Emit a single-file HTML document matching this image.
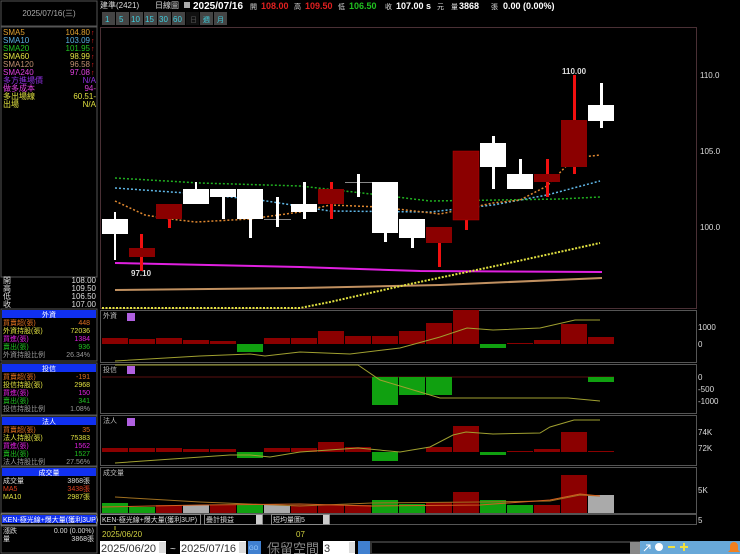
<!DOCTYPE html>
<html><head><meta charset="utf-8"><style>
html,body{margin:0;padding:0;background:#000;width:740px;height:554px;overflow:hidden}
svg{display:block}
text{font-family:"Liberation Sans","Noto Sans CJK TC",sans-serif}
.s{font-size:8px}
.m{font-family:"Liberation Mono","Noto Sans CJK TC",monospace}
</style></head><body>
<svg width="740" height="554" viewBox="0 0 740 554" xmlns="http://www.w3.org/2000/svg">
<rect width="740" height="554" fill="#000"/>
<!-- left panel -->
<rect x="1" y="1" width="96" height="25" fill="#000" stroke="#555"/>
<text x="49" y="16" fill="#aaa" font-size="8" text-anchor="middle">2025/07/16(三)</text>
<rect x="1" y="27" width="96" height="250" fill="#000" stroke="#555"/>
<g class="s" font-size="8">
<text x="3" y="35" fill="#e0a030">SMA5</text><text x="90" y="35" fill="#e0a030" text-anchor="end">104.80</text>
<text x="3" y="43" fill="#5ab0e0">SMA10</text><text x="90" y="43" fill="#5ab0e0" text-anchor="end">103.09</text>
<text x="3" y="51" fill="#20c020">SMA20</text><text x="90" y="51" fill="#20c020" text-anchor="end">101.95</text>
<text x="3" y="59" fill="#e0e040">SMA60</text><text x="90" y="59" fill="#e0e040" text-anchor="end">98.99</text>
<text x="3" y="67" fill="#c09070">SMA120</text><text x="90" y="67" fill="#c09070" text-anchor="end">96.58</text>
<text x="3" y="75" fill="#e040e0">SMA240</text><text x="90" y="75" fill="#e040e0" text-anchor="end">97.08</text>
<text x="3" y="83" fill="#9030e0">多方進場價</text><text x="96" y="83" fill="#9030e0" text-anchor="end">N/A</text>
<text x="3" y="91" fill="#e040e0">做多成本</text><text x="96" y="91" fill="#e040e0" text-anchor="end">94-</text>
<text x="3" y="99" fill="#e0e040">多出場線</text><text x="96" y="99" fill="#e0e040" text-anchor="end">60.51-</text>
<text x="3" y="107" fill="#e0e040">出場</text><text x="96" y="107" fill="#e0e040" text-anchor="end">N/A</text>
</g>
<g fill="#f02020" font-size="7"><text x="91" y="35">↑</text><text x="91" y="43">↑</text><text x="91" y="51">↑</text><text x="91" y="59">↑</text><text x="91" y="67">↑</text><text x="91" y="75">↑</text></g>
<g font-size="8" fill="#ddd">
<text x="3" y="283">開</text><text x="96" y="283" text-anchor="end">108.00</text>
<text x="3" y="291">高</text><text x="96" y="291" text-anchor="end">109.50</text>
<text x="3" y="299">低</text><text x="96" y="299" text-anchor="end">106.50</text>
<text x="3" y="307">收</text><text x="96" y="307" text-anchor="end">107.00</text>
</g>
<!-- 外資 block -->
<rect x="1" y="309" width="96" height="52" fill="#000" stroke="#555"/>
<rect x="2" y="310" width="94" height="8" fill="#1030f0"/>
<text x="49" y="317" fill="#fff" font-size="7" text-anchor="middle">外資</text>
<g font-size="7">
<text x="3" y="325" fill="#e07020">買賣超(張)</text><text x="90" y="325" fill="#e07020" text-anchor="end">448</text>
<text x="3" y="333" fill="#e0e040">外資持股(張)</text><text x="90" y="333" fill="#e0e040" text-anchor="end">72036</text>
<text x="3" y="341" fill="#e020e0">買進(張)</text><text x="90" y="341" fill="#e020e0" text-anchor="end">1384</text>
<text x="3" y="349" fill="#20c020">賣出(張)</text><text x="90" y="349" fill="#20c020" text-anchor="end">936</text>
<text x="3" y="357" fill="#999">外資持股比例</text><text x="90" y="357" fill="#999" text-anchor="end">26.34%</text>
</g>
<!-- 投信 block -->
<rect x="1" y="363" width="96" height="52" fill="#000" stroke="#555"/>
<rect x="2" y="364" width="94" height="8" fill="#1030f0"/>
<text x="49" y="371" fill="#fff" font-size="7" text-anchor="middle">投信</text>
<g font-size="7">
<text x="3" y="379" fill="#e07020">買賣超(張)</text><text x="90" y="379" fill="#e07020" text-anchor="end">-191</text>
<text x="3" y="387" fill="#e0e040">投信持股(張)</text><text x="90" y="387" fill="#e0e040" text-anchor="end">2968</text>
<text x="3" y="395" fill="#e020e0">買進(張)</text><text x="90" y="395" fill="#e020e0" text-anchor="end">150</text>
<text x="3" y="403" fill="#20c020">賣出(張)</text><text x="90" y="403" fill="#20c020" text-anchor="end">341</text>
<text x="3" y="411" fill="#999">投信持股比例</text><text x="90" y="411" fill="#999" text-anchor="end">1.08%</text>
</g>
<!-- 法人 block -->
<rect x="1" y="416" width="96" height="50" fill="#000" stroke="#555"/>
<rect x="2" y="417" width="94" height="8" fill="#1030f0"/>
<text x="49" y="424" fill="#fff" font-size="7" text-anchor="middle">法人</text>
<g font-size="7">
<text x="3" y="432" fill="#e07020">買賣超(張)</text><text x="90" y="432" fill="#e07020" text-anchor="end">35</text>
<text x="3" y="440" fill="#e0e040">法人持股(張)</text><text x="90" y="440" fill="#e0e040" text-anchor="end">75383</text>
<text x="3" y="448" fill="#e020e0">買進(張)</text><text x="90" y="448" fill="#e020e0" text-anchor="end">1562</text>
<text x="3" y="456" fill="#20c020">賣出(張)</text><text x="90" y="456" fill="#20c020" text-anchor="end">1527</text>
<text x="3" y="464" fill="#999">法人持股比例</text><text x="90" y="464" fill="#999" text-anchor="end">27.56%</text>
</g>
<!-- 成交量 block -->
<rect x="1" y="467" width="96" height="46" fill="#000" stroke="#555"/>
<rect x="2" y="468" width="94" height="8" fill="#1030f0"/>
<text x="49" y="475" fill="#fff" font-size="7" text-anchor="middle">成交量</text>
<g font-size="7">
<text x="3" y="483" fill="#ddd">成交量</text><text x="90" y="483" fill="#ddd" text-anchor="end">3868張</text>
<text x="3" y="491" fill="#e04020">MA5</text><text x="90" y="491" fill="#e04020" text-anchor="end">3438張</text>
<text x="3" y="499" fill="#e0e040">MA10</text><text x="90" y="499" fill="#e0e040" text-anchor="end">2987張</text>
</g>
<rect x="1" y="514" width="96" height="11" fill="#000" stroke="#888"/>
<rect x="2" y="515" width="94" height="8" fill="#1030f0"/>
<text x="3" y="522" fill="#fff" font-size="7">KEN-極光線+爆大量(獲利3UP)</text>
<rect x="1" y="526" width="96" height="27" fill="#000" stroke="#555"/>
<g font-size="7" fill="#ddd"><text x="3" y="533">漲跌</text><text x="94" y="533" text-anchor="end">0.00 (0.00%)</text>
<text x="3" y="541">量</text><text x="94" y="541" text-anchor="end">3868張</text></g>

<!-- top bar -->
<g font-size="8" fill="#ddd"><text x="100" y="8">建準(2421)</text><text x="155" y="8">日線圖</text></g>
<rect x="184" y="2" width="6" height="6" fill="#aaa"/>
<text x="193" y="9" fill="#fff" font-size="10" font-weight="bold">2025/07/16</text>
<g font-size="9" font-weight="bold">
<text x="250" y="9" fill="#ddd" font-size="7" font-weight="normal">開</text><text x="261" y="9" fill="#e02020">108.00</text>
<text x="294" y="9" fill="#ddd" font-size="7" font-weight="normal">高</text><text x="305" y="9" fill="#e02020">109.50</text>
<text x="338" y="9" fill="#ddd" font-size="7" font-weight="normal">低</text><text x="349" y="9" fill="#20c020">106.50</text>
<text x="385" y="9" fill="#ddd" font-size="7" font-weight="normal">收</text><text x="396" y="9" fill="#fff">107.00 s</text>
<text x="437" y="9" fill="#ddd" font-size="7" font-weight="normal">元</text>
<text x="451" y="9" fill="#ddd" font-size="7" font-weight="normal">量</text><text x="459" y="9" fill="#fff">3868</text>
<text x="491" y="9" fill="#ddd" font-size="7" font-weight="normal">張</text><text x="503" y="9" fill="#fff">0.00 (0.00%)</text>
</g>
<g font-size="8" fill="#40d0e0">
<rect x="102" y="12" width="13" height="13" fill="#444"/><text x="105" y="22">1</text>
<rect x="116" y="12" width="13" height="13" fill="#444"/><text x="119" y="22">5</text>
<rect x="130" y="12" width="13" height="13" fill="#444"/><text x="131" y="22">10</text>
<rect x="144" y="12" width="13" height="13" fill="#444"/><text x="145" y="22">15</text>
<rect x="158" y="12" width="13" height="13" fill="#444"/><text x="159" y="22">30</text>
<rect x="172" y="12" width="13" height="13" fill="#444"/><text x="173" y="22">60</text>
<rect x="186" y="12" width="13" height="13" fill="#111"/><text x="190" y="22" fill="#555" font-size="7">日</text>
<rect x="200" y="12" width="13" height="13" fill="#444"/><text x="203" y="22" font-size="7">週</text>
<rect x="214" y="12" width="13" height="13" fill="#444"/><text x="217" y="22" font-size="7">月</text>
</g>

<!-- main chart frame -->
<rect x="100.5" y="27.5" width="596" height="281" fill="none" stroke="#4a3035"/>
<g font-size="8" fill="#ddd"><text x="700" y="78">110.0</text><text x="700" y="154">105.0</text><text x="700" y="230">100.0</text></g>

<!-- lines -->
<polyline fill="none" stroke="#e020e0" stroke-width="2" points="115,263 300,267 420,271 602,272"/>
<polyline fill="none" stroke="#c09060" stroke-width="2" points="115,290 300,288 440,285 602,278"/>
<polyline fill="none" stroke="#e0e040" stroke-width="2" stroke-dasharray="2 1.5" points="102,308 300,308 330,302 410,284 500,265 600,243"/>
<polyline fill="none" stroke="#20b020" stroke-width="1.5" stroke-dasharray="2 2" points="115,178 200,183 300,186 380,195 430,201 500,200 560,199 600,197"/>
<polyline fill="none" stroke="#60b8e8" stroke-width="1.5" stroke-dasharray="2 2" points="115,188 200,194 260,200 330,211 430,212 493,205 547,195 600,181"/>
<polyline fill="none" stroke="#e08830" stroke-width="1.5" stroke-dasharray="2 2" points="115,201 145,215 170,219 196,222 250,219 300,212 330,205 380,207 440,214 493,203 520,200 547,186 574,158 600,155"/>

<!-- candles -->
<g>
<rect x="114" y="212" width="2" height="48" fill="#fff"/><rect x="102" y="219" width="26" height="15" fill="#fff"/>
<rect x="140" y="234" width="3" height="37" fill="#f01010"/><rect x="129" y="248" width="26" height="9" fill="#8b0000"/>
<rect x="168" y="204" width="3" height="24" fill="#f01010"/><rect x="156" y="204" width="26" height="15" fill="#8b0000"/>
<rect x="195" y="182" width="2" height="22" fill="#fff"/><rect x="183" y="189" width="26" height="15" fill="#fff"/>
<rect x="222" y="189" width="3" height="30" fill="#fff"/><rect x="210" y="189" width="26" height="8" fill="#fff"/>
<rect x="249" y="189" width="3" height="49" fill="#fff"/><rect x="237" y="189" width="26" height="30" fill="#fff"/>
<rect x="264" y="219" width="27" height="1" fill="#888"/><rect x="276" y="197" width="3" height="30" fill="#fff"/>
<rect x="303" y="182" width="3" height="37" fill="#fff"/><rect x="291" y="204" width="26" height="8" fill="#fff"/>
<rect x="330" y="182" width="3" height="37" fill="#f01010"/><rect x="318" y="189" width="26" height="15" fill="#8b0000"/>
<rect x="345" y="182" width="27" height="1" fill="#888"/><rect x="357" y="174" width="3" height="23" fill="#fff"/>
<rect x="384" y="182" width="3" height="60" fill="#fff"/><rect x="372" y="182" width="26" height="51" fill="#fff"/>
<rect x="411" y="219" width="3" height="29" fill="#fff"/><rect x="399" y="219" width="26" height="19" fill="#fff"/>
<rect x="438" y="227" width="3" height="40" fill="#f01010"/><rect x="426" y="227" width="26" height="16" fill="#8b0000"/>
<rect x="465" y="151" width="3" height="79" fill="#f01010"/><rect x="453" y="151" width="26" height="69" fill="#8b0000" stroke="#c00000" stroke-width="0.5"/>
<rect x="492" y="136" width="3" height="53" fill="#fff"/><rect x="480" y="143" width="26" height="24" fill="#fff"/>
<rect x="519" y="159" width="3" height="30" fill="#fff"/><rect x="507" y="174" width="26" height="15" fill="#fff"/>
<rect x="546" y="159" width="3" height="38" fill="#f01010"/><rect x="534" y="174" width="26" height="8" fill="#8b0000"/>
<rect x="573" y="75" width="3" height="99" fill="#f01010"/><rect x="561" y="120" width="26" height="47" fill="#8b0000"/>
<rect x="600" y="83" width="3" height="45" fill="#fff"/><rect x="588" y="105" width="26" height="16" fill="#fff"/>
</g>
<text x="131" y="276" fill="#ddd" font-size="8" font-weight="bold">97.10</text>
<text x="562" y="74" fill="#ddd" font-size="8" font-weight="bold">110.00</text>

<!-- 外資 panel -->
<rect x="100.5" y="310.5" width="596" height="52" fill="none" stroke="#555"/>
<text x="103" y="318" fill="#bbb" font-size="7">外資</text><rect x="127" y="313" width="8" height="8" fill="#b060e0"/>
<g fill="#8b0000">
<rect x="102" y="338" width="26" height="6"/><rect x="129" y="339" width="26" height="5"/><rect x="156" y="338" width="26" height="6"/><rect x="183" y="340" width="26" height="4"/><rect x="210" y="341" width="26" height="3"/>
<rect x="264" y="338" width="26" height="6"/><rect x="291" y="338" width="26" height="6"/><rect x="318" y="331" width="26" height="13"/><rect x="345" y="336" width="26" height="8"/><rect x="372" y="336" width="26" height="8"/><rect x="399" y="331" width="26" height="13"/><rect x="426" y="323" width="26" height="21"/><rect x="453" y="310" width="26" height="34"/>
<rect x="507" y="343" width="26" height="1"/><rect x="534" y="340" width="26" height="4"/><rect x="561" y="324" width="26" height="20"/><rect x="588" y="337" width="26" height="7"/>
</g>
<g fill="#10a010"><rect x="237" y="344" width="26" height="8"/><rect x="480" y="344" width="26" height="4"/></g>
<polyline fill="none" stroke="#a0a030" stroke-width="1" points="115,361 200,356 250,354 265,356 300,352 350,354 400,348 440,337 467,328 493,330 540,328 575,320 600,320"/>
<g font-size="8" fill="#ddd"><text x="698" y="330">1000</text><text x="698" y="347">0</text></g>

<!-- 投信 panel -->
<rect x="100.5" y="364.5" width="596" height="49" fill="none" stroke="#555"/>
<text x="103" y="372" fill="#bbb" font-size="7">投信</text><rect x="127" y="366" width="8" height="8" fill="#b060e0"/>
<line x1="102" y1="377" x2="614" y2="377" stroke="#5a1010" stroke-width="1"/>
<g fill="#10a010"><rect x="372" y="377" width="26" height="28"/><rect x="399" y="377" width="26" height="18"/><rect x="426" y="377" width="26" height="18"/><rect x="588" y="377" width="26" height="5"/></g>
<polyline fill="none" stroke="#a0a030" stroke-width="1" points="115,365 358,365 380,380 440,398 568,398 600,401"/>
<g font-size="8" fill="#ddd"><text x="698" y="380">0</text><text x="698" y="392">-500</text><text x="698" y="404">-1000</text></g>

<!-- 法人 panel -->
<rect x="100.5" y="415.5" width="596" height="50" fill="none" stroke="#555"/>
<text x="103" y="423" fill="#bbb" font-size="7">法人</text><rect x="127" y="418" width="8" height="8" fill="#b060e0"/>
<g fill="#8b0000">
<rect x="102" y="448" width="26" height="4"/><rect x="129" y="448" width="26" height="4"/><rect x="156" y="448" width="26" height="4"/><rect x="183" y="449" width="26" height="3"/><rect x="210" y="449" width="26" height="3"/>
<rect x="264" y="448" width="26" height="4"/><rect x="291" y="448" width="26" height="4"/><rect x="318" y="442" width="26" height="10"/><rect x="345" y="447" width="26" height="5"/>
<rect x="426" y="447" width="26" height="5"/><rect x="453" y="426" width="26" height="26"/><rect x="507" y="451" width="26" height="1"/><rect x="534" y="449" width="26" height="3"/><rect x="561" y="432" width="26" height="20"/><rect x="588" y="451" width="26" height="1"/>
</g>
<g fill="#10a010"><rect x="237" y="452" width="26" height="6"/><rect x="372" y="452" width="26" height="9"/><rect x="480" y="452" width="26" height="3"/></g>
<polyline fill="none" stroke="#a0a030" stroke-width="1" points="115,463 230,455 250,455 270,457 300,452 358,448 400,452 430,447 453,435 466,432 493,434 540,433 550,427 574,420 600,420"/>
<g font-size="8" fill="#ddd"><text x="698" y="435">74K</text><text x="698" y="451">72K</text></g>

<!-- 成交量 panel -->
<rect x="100.5" y="467.5" width="596" height="46" fill="none" stroke="#555"/>
<text x="103" y="475" fill="#bbb" font-size="7">成交量</text>
<g>
<rect x="102" y="503" width="26" height="10" fill="#10a010"/><rect x="129" y="507" width="26" height="6" fill="#10a010"/><rect x="156" y="505" width="26" height="8" fill="#8b0000"/><rect x="183" y="505" width="26" height="8" fill="#aaa"/><rect x="210" y="505" width="26" height="8" fill="#8b0000"/><rect x="237" y="505" width="26" height="8" fill="#10a010"/><rect x="264" y="505" width="26" height="8" fill="#aaa"/><rect x="291" y="505" width="26" height="8" fill="#8b0000"/><rect x="318" y="505" width="26" height="8" fill="#8b0000"/><rect x="345" y="505" width="26" height="8" fill="#8b0000"/>
<rect x="372" y="500" width="26" height="13" fill="#10a010"/><rect x="399" y="504" width="26" height="9" fill="#10a010"/><rect x="426" y="502" width="26" height="11" fill="#8b0000"/><rect x="453" y="492" width="26" height="21" fill="#8b0000"/><rect x="480" y="500" width="26" height="13" fill="#10a010"/><rect x="507" y="505" width="26" height="8" fill="#10a010"/><rect x="534" y="505" width="26" height="8" fill="#8b0000"/><rect x="561" y="475" width="26" height="38" fill="#8b0000"/><rect x="588" y="495" width="26" height="18" fill="#aaa"/>
</g>
<polyline fill="none" stroke="#a07020" stroke-width="1" points="115,497 200,502 300,506 372,503 480,502 550,501 580,495 600,496"/>
<polyline fill="none" stroke="#d06020" stroke-width="1" points="102,507 200,505 300,504 372,506 480,505 550,500 580,494 600,496"/>
<text x="698" y="493" fill="#ddd" font-size="8">5K</text>
<rect x="100.5" y="514.5" width="596" height="10" fill="none" stroke="#555"/>
<text x="698" y="523" fill="#ddd" font-size="8">5</text>

<!-- combos row -->
<rect x="100.5" y="514.5" width="100" height="10" fill="#000" stroke="#888"/>
<text x="102" y="522" fill="#ddd" font-size="7">KEN-極光線+爆大量(獲利3UP)</text>
<rect x="204.5" y="514.5" width="58" height="10" fill="#000" stroke="#888"/>
<text x="206" y="522" fill="#ddd" font-size="7">疊計損益</text><rect x="256" y="515" width="6" height="9" fill="#ccc"/>
<rect x="271.5" y="514.5" width="58" height="10" fill="#000" stroke="#888"/>
<text x="273" y="522" fill="#ddd" font-size="7">短均量圖5</text><rect x="323" y="515" width="6" height="9" fill="#ccc"/>
<line x1="115" y1="526" x2="115" y2="530" stroke="#c0c030"/>
<text x="102" y="537" fill="#d0d040" font-size="8">2025/06/20</text>
<text x="296" y="537" fill="#d0d040" font-size="8">07</text>

<!-- date inputs -->
<rect x="100" y="541" width="66" height="13" fill="#fff"/><text x="101" y="552" fill="#333" font-size="11">2025/06/20</text>
<rect x="159" y="542" width="7" height="11" fill="#ddd"/>
<text x="170" y="552" fill="#ddd" font-size="10">~</text>
<rect x="180" y="541" width="66" height="13" fill="#fff"/><text x="181" y="552" fill="#333" font-size="11">2025/07/16</text>
<rect x="239" y="542" width="7" height="11" fill="#ddd"/>
<rect x="248" y="541" width="13" height="13" fill="#4080d0"/><text x="249" y="550" fill="#9cf" font-size="6">GO</text>
<text x="267" y="553" fill="#888" font-size="13">保留空間</text>
<rect x="323" y="541" width="32" height="13" fill="#fff"/><text x="324" y="552" fill="#333" font-size="11">3</text>
<rect x="349" y="542" width="6" height="11" fill="#ddd"/>
<rect x="358" y="541" width="12" height="13" fill="#4080d0"/>
<rect x="370" y="541" width="270" height="13" fill="#333"/>
<rect x="372" y="543" width="258" height="10" fill="#000"/>
<rect x="630" y="542" width="10" height="12" fill="#888"/>
<rect x="640" y="541" width="100" height="13" fill="#68a8d8"/>
<g fill="#fff"><circle cx="659" cy="547" r="4"/><rect x="668" y="546" width="7" height="2" fill="#f0e040"/><rect x="680" y="546" width="8" height="2" fill="#f0e040"/><rect x="683" y="543" width="2" height="8" fill="#f0e040"/></g>
<path d="M644 551 L650 545 M646 545 L650 545 L650 549" stroke="#fff" fill="none"/>
<path d="M728 552 L740 552 L738 550 L738 546 A4 4 0 0 0 730 546 L730 550 Z" fill="#f08020"/>
</svg>
</body></html>
